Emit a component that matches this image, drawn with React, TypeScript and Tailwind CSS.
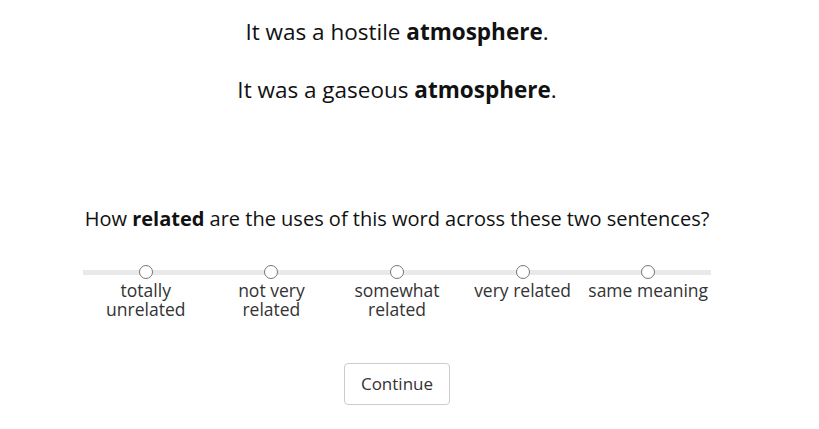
const options = [
  ["totally", "unrelated"],
  ["not very", "related"],
  ["somewhat", "related"],
  ["very related"],
  ["same meaning"],
];

export default function App() {
  return (
    <div
      className="w-[794px] bg-white text-[#111] pt-[17px]"
      style={{ fontFamily: '"Open Sans", sans-serif' }}
    >
      <div className="flex flex-col items-center">
        <p className="text-[22.5px] leading-[30px]">
          It was a hostile <b>atmosphere</b>.
        </p>
        <p className="text-[22.5px] leading-[30px] mt-[28px]">
          It was a gaseous <b>atmosphere</b>.
        </p>
        <p className="text-[20px] leading-[28px] mt-[100px]">
          How <b>related</b> are the uses of this word across these two sentences?
        </p>
      </div>

      <div className="mx-auto mt-[32px] w-[628px] relative">
        <div className="absolute left-0 right-0 top-[5px] h-[5px] bg-[#e9e9e9]" />
        <div className="relative grid grid-cols-5">
          {options.map((lines, i) => (
            <div key={i} className="flex flex-col items-center">
              <div className="w-[14px] h-[14px] rounded-full border border-[#777] bg-white" />
              <div className="text-[17.5px] leading-[19px] text-[#333] text-center mt-[2px]">
                {lines.map((l, j) => (
                  <div key={j}>{l}</div>
                ))}
              </div>
            </div>
          ))}
        </div>
      </div>

      <div className="flex justify-center mt-[44px]">
        <button className="w-[106px] h-[42px] rounded border border-[#ccc] bg-white text-[17px] text-[#333]">
          Continue
        </button>
      </div>
    </div>
  );
}
